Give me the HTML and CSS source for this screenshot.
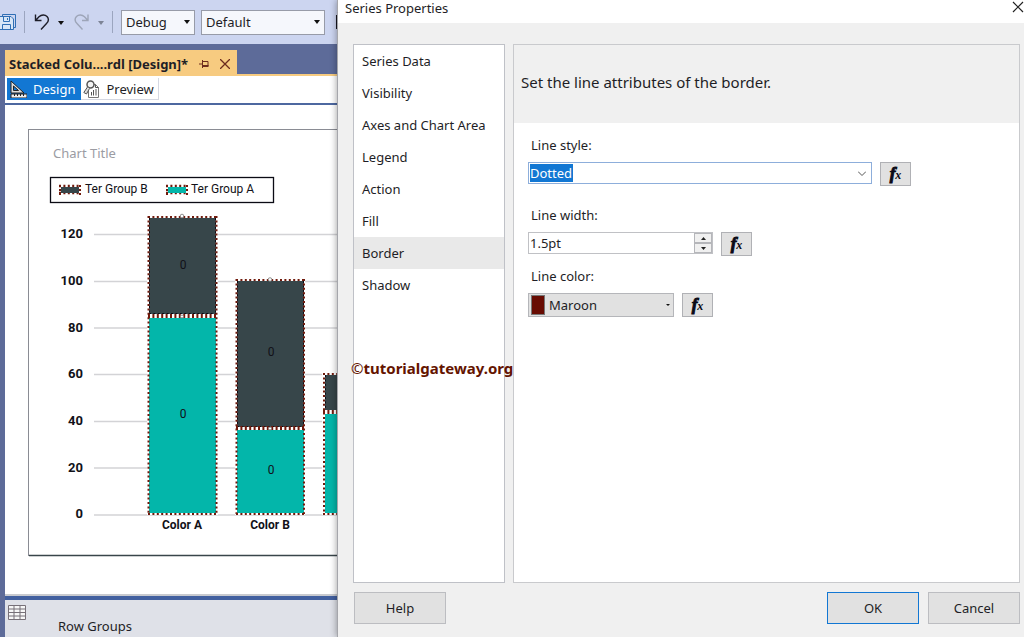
FILE: index.html
```html
<!DOCTYPE html>
<html lang="en">
<head>
<meta charset="utf-8">
<title>Series Properties</title>
<link rel="stylesheet" href="styles.css">
</head>
<body>
<div class="app">
  <section class="ide">
    <div class="toolbar">
      <button class="icon-btn" aria-label="Save all">
        <svg width="16" height="18" viewBox="0 0 16 18" fill="none" stroke="#2f6fb5"><path d="M2.500 3V1.500H15.500V14.500H13.500"/><path d="M-1 3.500H11L13.500 6V16.500H-1" fill="#d7e6f7"/><path d="M3.500 3.500V8.500H9.500V3.500M2.500 16.500V11.500H10.500V16.500M7.500 5V7"/></svg>
      </button>
      <span class="divider"></span>
      <button class="icon-btn" aria-label="Undo">
        <svg width="16" height="18" viewBox="0 0 16 18" fill="none" stroke="#1d1d28" stroke-width="1.400"><path d="M1.500 1.500V7.500H7.500M1.800 7.200L5 3.800C7.500 1.500 11 1.500 13 3.500C15 5.800 14.500 8.500 12.500 10.500L7 16.500"/></svg>
      </button>
      <svg class="arrow" width="6" height="4" viewBox="0 0 6 4"><path d="M0 0H6L3 4Z" fill="#111"/></svg>
      <button class="icon-btn redo" aria-label="Redo">
        <svg width="16" height="18" viewBox="0 0 16 18" fill="none" stroke="#9da5b8" stroke-width="1.400"><path d="M14 1.500V7.500H8M13.700 7.200L10.500 3.800C8 1.500 4.500 1.500 2.500 3.500C.5 5.800 1 8.500 3 10.500L8.500 16.500"/></svg>
      </button>
      <svg class="arrow last" width="6" height="4" viewBox="0 0 6 4"><path d="M0 0H6L3 4Z" fill="#7d8496"/></svg>
      <span class="divider"></span>
      <select class="tool-select config" aria-label="Configuration"><option>Debug</option></select>
      <select class="tool-select platform" aria-label="Platform"><option>Default</option></select>
      <span class="clipped"></span>
    </div>
    <div class="workspace">
      <div class="doc-tab">
        <span>Stacked Colu....rdl [Design]*</span>
        <button class="icon-btn pin" aria-label="Pin"><svg width="10" height="8" viewBox="0 0 10 8" fill="none" stroke="#6d2c1e"><path d="M0 4H3.500M3.500 0V8M3.500 1.500H9V6M3.500 5.500H9.500M3.500 6.500H9.500"/></svg></button>
        <button class="icon-btn" aria-label="Close document"><svg width="10" height="10" viewBox="0 0 10 10" fill="none" stroke="#6d2c1e" stroke-width="1.300"><path d="M0 0L10 10M10 0L0 10"/></svg></button>
      </div>
      <div class="view-tabs">
        <button class="view-tab active">
          <svg width="17" height="18" viewBox="0 0 17 18"><path d="M1 1L14 13H1Z" fill="#dedede" stroke="#222"/><path d="M3.500 6V10.500H8.500Z" fill="#1277d3" stroke="#222"/><path d="M1 14H17V18H1Z" fill="#efefef" stroke="#222"/><path d="M4.500 14V16M7.500 14V16M10.500 14V16M13.500 14V16" stroke="#222"/></svg>
          Design
        </button>
        <button class="view-tab">
          <svg width="17" height="18" viewBox="0 0 17 18"><path d="M6.500 4.500H12.500L15.500 7.500V17.500H5.500V11" fill="#fff" stroke="#777"/><path d="M12.500 4.500V7.500H15.500M8.500 15.500V12M10.500 15.500V10M13 15.500V9" fill="none" stroke="#555"/><circle cx="7.500" cy="4.500" r="3.500" fill="#f4f4f4" stroke="#555" stroke-width="1.500"/><path d="M4.500 7L.8 12.500L3.500 14L6.500 8.500" fill="#ddd" stroke="#555"/></svg>
          Preview
        </button>
      </div>
      <div class="surface">
        <svg class="chart" width="400" height="428" viewBox="28 129 400 428">
          <rect x="28.500" y="129.500" width="398" height="426" fill="#fff" stroke="#8a8c94"/>
          <path d="M29 555.500H427" stroke="#39454a" stroke-width="1.500"/>
          <text class="chart-title" x="53" y="158">Chart Title</text>
          <rect x="50.500" y="177.500" width="223" height="25" fill="#fff" stroke="#0b0b14" stroke-width="1.300"/>
          <path d="M59 186H81M59 193H81M166 186H188M166 193H188" stroke="#701a0c" stroke-width="2.500" stroke-dasharray="2 2.400"/>
          <path d="M60 185V195M80 185V195M167 185V195M187 185V195" stroke="#701a0c" stroke-width="2" stroke-dasharray="2 2"/>
          <rect x="61" y="187" width="18" height="6" fill="#37464a"/>
          <rect x="168" y="187" width="18" height="6" fill="#03b6aa"/>
          <g class="legend-text"><text x="85" y="193">Ter Group B</text><text x="191" y="193">Ter Group A</text></g>
          <path d="M94 234.500H427M94 281.500H427M94 328H427M94 374.500H427M94 421.500H427M94 468H427M94 515H427" stroke="#d3d3d6" stroke-width="1.300"/>
          <g class="axis"><text x="83" y="238">120</text><text x="83" y="285">100</text><text x="83" y="332">80</text><text x="83" y="378">60</text><text x="83" y="425">40</text><text x="83" y="472">20</text><text x="83" y="518">0</text></g>
          <g fill="#fff"><rect x="147" y="215" width="71" height="300"/><rect x="235" y="278" width="70" height="237"/><rect x="322" y="372" width="71" height="143"/></g>
          <g fill="#37464a"><rect x="149" y="218" width="67" height="96"/><rect x="237" y="281" width="67" height="146"/><rect x="325" y="375" width="67" height="35"/></g>
          <g fill="#03b6aa"><rect x="149" y="318" width="67" height="195"/><rect x="237" y="430" width="67" height="83"/><rect x="325" y="414" width="67" height="99"/></g>
          <g class="inner-dots"><path d="M149.500 218V314M215.500 218V314M149 313.500H216M237.500 281V427M303.500 281V427M237 426.500H304M325.500 375V410"/></g>
          <g class="dots">
            <path d="M148 217H218M148 514H218M148.500 216V514M216.500 216V514"/>
            <path d="M236 280H305M236 514H305M236.500 279V514M304 279V514"/>
            <path d="M323 374H393M323 514H393M324 373V514M392 373V514"/>
          </g>
          <g class="dots joint"><path d="M148 316H218M236 428H305M323 412H393"/></g>
          <g fill="#fff" stroke="#777" stroke-width=".8"><circle cx="182" cy="216" r="1.800"/><circle cx="182" cy="316.500" r="1.500"/><circle cx="270" cy="279.500" r="1.800"/><circle cx="270" cy="428.500" r="1.500"/></g>
          <g class="point-label"><text x="183" y="269">0</text><text x="183" y="418">0</text><text x="271" y="356">0</text><text x="271" y="474">0</text></g>
          <g class="category"><text x="182" y="529">Color A</text><text x="270" y="529">Color B</text></g>
        </svg>
      </div>
      <div class="groups">
        <svg width="18" height="15" viewBox="0 0 18 15"><path d="M.5 .5H17.500V14.500H.5Z" fill="#f7f7f7"/><path d="M.5 .5H17.500V14.500H.5ZM0 4H18M0 7.500H18M0 11H18M6 0V15M12 0V15" fill="none" stroke="#777078"/></svg>
        <span>Row Groups</span>
      </div>
    </div>
  </section>

  <main class="dialog">
    <header class="title-bar">
      <h1>Series Properties</h1>
      <button class="icon-btn" aria-label="Close"><svg width="12" height="12" viewBox="0 0 12 12" fill="none" stroke="#222" stroke-width="1.200"><path d="M1 1L11 11M11 1L1 11"/></svg></button>
    </header>
    <div class="panels">
      <nav class="pages">
        <a href="#data">Series Data</a>
        <a href="#visibility">Visibility</a>
        <a href="#axes">Axes and Chart Area</a>
        <a href="#legend">Legend</a>
        <a href="#action">Action</a>
        <a href="#fill">Fill</a>
        <a href="#border" class="current" aria-current="page">Border</a>
        <a href="#shadow">Shadow</a>
      </nav>
      <form class="page" id="border">
        <h2>Set the line attributes of the border.</h2>
        <div class="field style-field">
          <label for="line-style">Line style:</label>
          <div class="row">
            <div class="combo">
              <select id="line-style"><option>Dotted</option></select>
              <svg width="8" height="5" viewBox="0 0 8 5" fill="none" stroke="#555"><path d="M0 .5L4 4.500L8 .5"/></svg>
            </div>
            <button type="button" class="fx" aria-label="Line style expression"><i>f</i><i class="sub">x</i></button>
          </div>
        </div>
        <div class="field width-field">
          <label for="line-width">Line width:</label>
          <div class="row">
            <div class="spinner">
              <input id="line-width" type="text" value="1.5pt">
              <div class="steps">
                <button type="button" aria-label="Increase"><svg width="5" height="3" viewBox="0 0 5 3"><path d="M0 3H5L2.500 0Z" fill="#222"/></svg></button>
                <button type="button" aria-label="Decrease"><svg width="5" height="3" viewBox="0 0 5 3"><path d="M0 0H5L2.500 3Z" fill="#222"/></svg></button>
              </div>
            </div>
            <button type="button" class="fx" aria-label="Line width expression"><i>f</i><i class="sub">x</i></button>
          </div>
        </div>
        <div class="field">
          <label for="line-color">Line color:</label>
          <div class="row">
            <div class="color">
              <span class="swatch"></span>
              <select id="line-color"><option>Maroon</option></select>
              <svg width="4" height="2" viewBox="0 0 4 2"><path d="M0 0H4L2 2Z" fill="#111"/></svg>
            </div>
            <button type="button" class="fx" aria-label="Line color expression"><i>f</i><i class="sub">x</i></button>
          </div>
        </div>
      </form>
    </div>
    <footer class="actions">
      <button>Help</button>
      <button class="default">OK</button>
      <button>Cancel</button>
    </footer>
    <p class="watermark"><span>©</span>tutorialgateway.org</p>
  </main>
</div>
</body>
</html>
```
FILE: styles.css
```css
* { box-sizing: border-box; }
body {
  margin: 0;
  font: 13px/18px "Noto Sans", "Open Sans", sans-serif;
  color: #1e1e26;
}
button, select, input { font: inherit; color: inherit; margin: 0; border-radius: 0; }
svg { display: block; flex: none; }
h1, h2, p { margin: 0; font-weight: 400; }

.app { display: flex; height: 100vh; min-height: 600px; overflow: hidden; }
.ide { flex: 0 0 337px; min-width: 0; display: flex; flex-direction: column; overflow: hidden; background: #5d6b99; }
.icon-btn { border: 0; padding: 0; background: none; }

.toolbar { height: 44px; flex: none; display: flex; align-items: center; background: #ccd5f0; }
.toolbar > * { flex: none; }
.divider { width: 1px; height: 22px; margin: 0 8px; background: #9ba5bf; }
.divider + .icon-btn { margin-left: 1px; }
.arrow { margin: 2px 10px 0 8px; }
.arrow.last { margin-right: 0; }
.tool-select {
  appearance: none;
  height: 25px;
  padding: 0 4px;
  border: 1px solid #979ba8;
  background: #f5f7fc url("data:image/svg+xml,%3Csvg xmlns='http://www.w3.org/2000/svg' width='6' height='4'%3E%3Cpath d='M0 0H6L3 4Z' fill='%23111'/%3E%3C/svg%3E") no-repeat right 4px center;
}
.config { width: 74px; margin-right: 6px; }
.platform { width: 124px; }
.clipped { width: 4px; height: 14px; margin-left: 11px; background: #16161e; }

.workspace { flex: 1; min-height: 0; display: flex; flex-direction: column; padding: 6px 0 0 5px; }
.doc-tab {
  align-self: flex-start;
  height: 24px;
  display: flex;
  align-items: center;
  padding: 3px 7px 0 4px;
  gap: 11px;
  background: #f7cb80;
  font-weight: 700;
  font-size: 13px;
}
.view-tabs { height: 31px; flex: none; display: flex; align-items: flex-start; padding: 2px 0 0 2px; background: #fff; border-top: 2px solid #f7cb80; border-bottom: 2px solid #4d68a0; }
.view-tab { height: 22px; display: flex; align-items: center; gap: 6px; padding: 0 4px 0 2px; border: 0; border-right: 1px solid #d5d8e2; border-bottom: 1px solid #d5d8e2; background: #fff; }
.view-tab.active { padding: 0 5px 0 3px; border-color: #1277d3; background: #1277d3; color: #fff; }
.surface { flex: 1; min-height: 0; overflow: hidden; padding: 24px 0 0 23px; background: #fff; border-bottom: 2px solid #c8cacf; }
.groups { height: 41px; flex: none; display: flex; gap: 32px; padding: 5px 0 0 3px; border-top: 4px solid #42609f; background: #dfe1e8; }
.groups span { padding-top: 12px; }

.chart text { fill: #111118; font-family: Roboto, sans-serif; }
.chart .chart-title { fill: #9b9ca3; font: 13px "Noto Sans", sans-serif; }
.chart .legend-text { font-size: 12px; }
.chart .axis { font-size: 13px; font-weight: 700; text-anchor: end; }
.chart .category { font-size: 12px; font-weight: 700; text-anchor: middle; }
.chart .point-label { font-size: 12px; text-anchor: middle; }
.dots { fill: none; stroke: #701a0c; stroke-width: 2; stroke-dasharray: 2 2.400; }
.dots.joint { stroke-width: 4; }
.inner-dots { fill: none; stroke: #080a14; stroke-dasharray: 2 2.400; }

.dialog { position: relative; z-index: 1; flex: 1; min-width: 0; display: flex; flex-direction: column; border-left: 1px solid #a5a6ab; background: #f0f0f0; box-shadow: 0 0 7px rgba(0, 0, 0, .4); }
.title-bar { height: 23px; flex: none; display: flex; justify-content: space-between; align-items: flex-start; padding: 0 0 0 7px; background: #fff; }
h1 { font-size: 13px; line-height: 16px; }
.title-bar .icon-btn { padding-top: 1px; }
.panels { flex: 1; min-height: 0; display: flex; gap: 8px; padding: 21px 4px 0 15px; }
.pages { flex: 0 0 152px; border: 1px solid #bfc1c7; background: #fff; }
.pages a { display: block; height: 32px; padding: 0 8px; line-height: 32px; color: inherit; text-decoration: none; }
.pages .current { background: #e9e9e9; }
.page { flex: 1; min-width: 0; border: 1px solid #c9cacd; background: #fff; }
h2 { padding: 26px 7px 30px; font-size: 15px; line-height: 22px; background: #f0f0f0; }

.field { padding: 0 14px; }
.field label { display: block; padding-left: 3px; line-height: 18px; }
.style-field { padding-top: 13px; padding-bottom: 20px; }
.width-field { padding-bottom: 11px; }
.row { display: flex; gap: 8px; padding-top: 8px; }
.combo { flex: 0 1 344px; height: 22px; display: flex; align-items: center; justify-content: space-between; padding: 0 5px 0 1px; border: 1px solid #8daedb; }
.combo select { appearance: none; height: 18px; padding: 0; border: 0; line-height: 18px; background: #1277d3; color: #fff; }
.spinner { flex: 0 1 185px; min-width: 0; height: 22px; display: flex; border: 1px solid #c0c1c5; }
.spinner input { flex: 1; width: 0; min-width: 0; padding: 0 1px; border: 0; background: #fff; }
.steps { flex: none; width: 18px; display: flex; flex-direction: column; }
.steps button { flex: 1; display: flex; align-items: center; justify-content: center; padding: 0; border: 1px solid #b5b6ba; background: #f0f0f0; }
.color { flex: 0 1 146px; height: 24px; display: flex; align-items: center; padding: 0 3px 0 2px; border: 1px solid #b5b6ba; background: #e1e1e1; }
.swatch { width: 14px; height: 20px; margin-right: 4px; border: 1px solid #777; background: #680c03; }
.color select { appearance: none; flex: 1; min-width: 0; padding: 0; border: 0; background: none; }
.fx { flex: none; width: 31px; height: 24px; padding: 0; border: 1px solid #b0b1b5; background: #e1e1e1; font: bold 17px/20px "Liberation Serif", serif; color: #0a0a16; -webkit-text-stroke: 1px #0a0a16; }
.fx .sub { font-size: 12px; -webkit-text-stroke: 0; }

.actions { display: flex; gap: 9px; padding: 9px 4px 13px 16px; }
.actions button { width: 92px; height: 32px; border: 1px solid #bcbdc1; background: #e1e1e1; }
.actions .default { margin-left: auto; border-color: #1277d3; }
.watermark { position: absolute; left: 13px; top: 358px; font-size: 15px; line-height: 20px; font-weight: 700; color: #641400; }
.watermark span { font-weight: 400; }
```
